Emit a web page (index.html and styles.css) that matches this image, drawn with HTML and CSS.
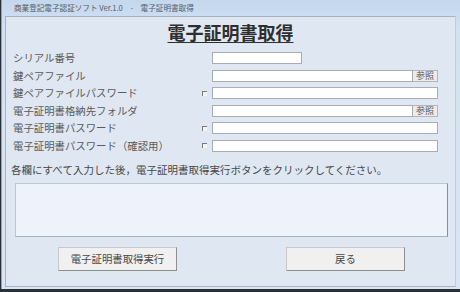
FILE: index.html
```html
<!DOCTYPE html>
<html lang="ja">
  <head>
    <meta charset="UTF-8" />
    <title>電子証明書取得</title>
    <link rel="stylesheet" href="styles.css">
  </head>
  <body>
    <div class="window">
      <div class="titlebar">商業登記電子認証ソフト Ver.1.0　-　電子証明書取得</div>
      <div class="panel">
        <h1 class="heading">電子証明書取得</h1>

        <div class="form">
          <div class="label">シリアル番号</div>
          <div class="check-cell"></div>
          <div class="field-cell"><span class="field short"></span></div>

          <div class="label">鍵ペアファイル</div>
          <div class="check-cell"></div>
          <div class="field-cell"><span class="field"></span><button class="browse">参照</button></div>

          <div class="label">鍵ペアファイルパスワード</div>
          <div class="check-cell"><span class="check"></span></div>
          <div class="field-cell"><span class="field"></span></div>

          <div class="label">電子証明書格納先フォルダ</div>
          <div class="check-cell"></div>
          <div class="field-cell"><span class="field"></span><button class="browse">参照</button></div>

          <div class="label">電子証明書パスワード</div>
          <div class="check-cell"><span class="check"></span></div>
          <div class="field-cell"><span class="field"></span></div>

          <div class="label">電子証明書パスワード（確認用）</div>
          <div class="check-cell"><span class="check"></span></div>
          <div class="field-cell"><span class="field"></span></div>
        </div>

        <p class="note">各欄にすべて入力した後，電子証明書取得実行ボタンをクリックしてください。</p>
        <div class="message"></div>

        <div class="actions">
          <button class="btn">電子証明書取得実行</button>
          <button class="btn">戻る</button>
        </div>
      </div>
    </div>
  </body>
</html>
```

FILE: styles.css
```css
* {
  padding: 0;
  margin: 0;
  box-sizing: border-box;
}

body {
  width: 460px;
  height: 292px;
  background: #2b3036;
  font-family: "Noto Sans CJK JP", "Liberation Sans", sans-serif;
  overflow: hidden;
}

.window {
  height: 289px;
  margin-left: 1px;
  display: flex;
  flex-direction: column;
  background: linear-gradient(#c3d7ee, #d3e2f3 30px, #d8e5f4);
  border-left: 1px solid #8fa3ba;
}

.titlebar {
  height: 16px;
  padding-left: 12px;
  font-size: 7.6px;
  line-height: 15px;
  color: #555a62;
  white-space: nowrap;
}

.panel {
  flex: 1;
  margin: 0 4px 2px 3px;
  padding: 5px 7px 0 7px;
  background: #dfe7f3;
  border: 1px solid #a7b3c3;
  border-right-color: #c2ccd8;
}

.heading {
  text-align: center;
  font-size: 18px;
  line-height: 20px;
  font-weight: bold;
  color: #2e2e2e;
  text-decoration: underline;
  text-decoration-thickness: 1px;
  text-underline-offset: 2px;
  margin-bottom: 10px;
}

.form {
  display: grid;
  grid-template-columns: 188px 11px 226px;
  grid-auto-rows: 12px;
  row-gap: 5.5px;
}

.label {
  font-size: 10.4px;
  line-height: 12px;
  color: #5a5a5a;
  white-space: nowrap;
}

.check-cell {
  display: flex;
  align-items: center;
  padding-left: 1px;
}

.check {
  width: 5px;
  height: 5px;
  border-top: 1px solid #7a7a7a;
  border-left: 1px solid #7a7a7a;
  background: #f4f4f4;
}

.field-cell {
  display: flex;
}

.field {
  flex: 1;
  height: 12px;
  background: #fff;
  border: 1px solid #a8adb5;
}

.field.short {
  flex: none;
  width: 90px;
}

.browse {
  width: 25px;
  height: 12px;
  font-family: inherit;
  font-size: 9px;
  line-height: 10px;
  color: #555;
  background: #ececec;
  border: 1px solid #b5b5b5;
  border-left: none;
}

.note {
  margin: 11px 0 0 -2px;
  font-size: 10.5px;
  line-height: 14px;
  color: #474747;
  white-space: nowrap;
}

.message {
  height: 54px;
  margin: 6px 0 0 2px;
  background: #eef3fb;
  border: 1px solid #bcc5d1;
  border-right-color: #8a8f96;
  border-bottom-color: #a9b1bc;
}

.actions {
  display: flex;
  gap: 109px;
  margin-top: 10px;
  padding-left: 45px;
}

.btn {
  width: 119px;
  height: 24px;
  font-family: inherit;
  font-size: 10.4px;
  color: #474747;
  background: #f0f0f0;
  border: 1px solid #c9c9c9;
  border-right-color: #8e8e8e;
  border-bottom-color: #8e8e8e;
}
```
